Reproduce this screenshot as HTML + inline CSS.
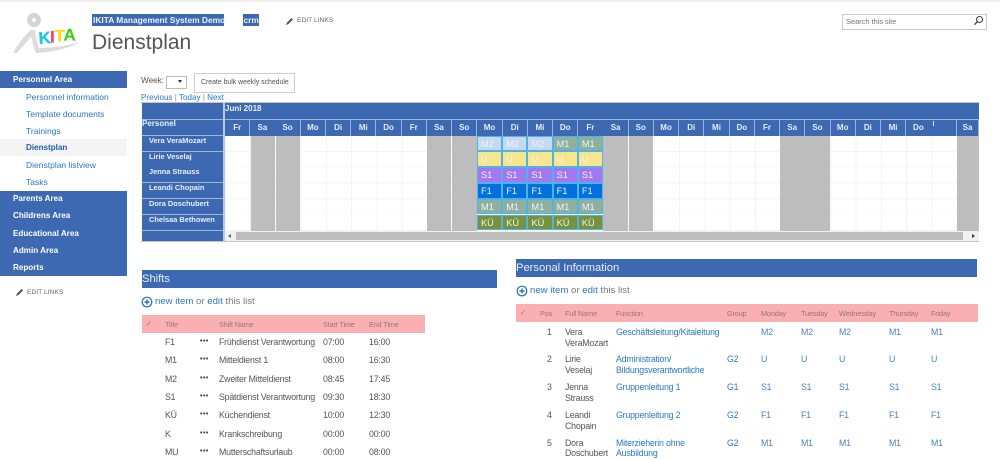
<!DOCTYPE html>
<html><head><meta charset="utf-8"><title>Dienstplan</title>
<style>
html,body{margin:0;padding:0;background:#fff}
body{width:1000px;height:460px;overflow:hidden;position:relative;font-family:"Liberation Sans",sans-serif;font-size:9.5px;color:#555}
.a,.t{position:absolute;white-space:nowrap}
.t{line-height:12px}
.b{color:#2a78c4}
.nav{left:0;width:127px;background:#3d68b2;color:#fff;font-weight:bold;font-size:8.1px}
.nav div{position:absolute;left:13px;line-height:12px;white-space:nowrap}
.sub{left:26px;color:#2a78c4;font-size:8.5px}
.head{background:#3d68b2;color:#e8eef8;font-size:11.2px;line-height:19px}
.pink{background:#fab0b2}
.pink .t{color:#96787a;font-size:7.3px;letter-spacing:-.15px}
.r .t{font-size:8.8px;letter-spacing:-.2px}
.r .t[style*="font-weight:bold"]{font-size:7px;color:#444;letter-spacing:.5px}
.hd{position:absolute;top:120px;width:24.4px;height:15.5px;background:#3d68b2;color:#e6ecf7;font-weight:bold;font-size:8px;line-height:15px;text-align:center}
.nm{position:absolute;left:142px;width:81px;height:15px;background:#3d68b2;color:#e8eef8;font-weight:bold;font-size:7.4px;line-height:10px;text-indent:7px;white-space:nowrap}
.gr{position:absolute;top:135.5px;height:95px;width:24.7px;background:#bdbdbd}
.row{position:absolute;left:477px;height:15.8px;display:flex}
.row div{width:25.23px;height:15.8px;box-sizing:border-box;border:1px solid #4fb3e8;color:#eef3f8;font-size:9.2px;line-height:15px;text-indent:3px}
.m2{background:#c6d9f1}.m1{background:#8fb09f}.u{background:#f8e68f}.s1{background:#a377ef}.f1{background:#0070dc}.ku{background:#76923c}
.v{color:#4a7fc8}
</style></head><body>
<div class="a" style="left:0;top:0;width:1000px;height:2px;background:#efefef"></div>

<svg class="a" style="left:5px;top:8px" width="80" height="50" viewBox="0 0 80 50">
<circle cx="29" cy="12" r="4.5" fill="none" stroke="#d4d4d4" stroke-width="5"/>
<path d="M8 45C13 36 20 27 27 21L29 25C24 32 17 39 12 45Z" fill="#dcdcdc"/>
<path d="M25 24L30 22C31 30 32 35 34 40C46 40 62 38 75 34C66 40 48 44 31 45C28 38 27 31 25 24Z" fill="#dcdcdc"/>
<text x="34" y="36" font-family="Liberation Sans" font-weight="bold" font-size="17" fill="#18c8e8" stroke="#18c8e8" stroke-width=".3" transform="rotate(-4 34 36)">K</text>
<text x="45" y="34.500" font-family="Liberation Sans" font-weight="bold" font-size="17" fill="#f0407a" stroke="#f0407a" stroke-width=".3">I</text>
<text x="49.500" y="33.500" font-family="Liberation Sans" font-weight="bold" font-size="17" fill="#f6dc1c" stroke="#f6dc1c" stroke-width=".3">T</text>
<text x="58.500" y="32.500" font-family="Liberation Sans" font-weight="bold" font-size="17" fill="#3ed21e" stroke="#3ed21e" stroke-width=".3">A</text>
</svg>

<div class="a" style="left:92px;top:14px;width:132px;height:12px;background:#3d68b2"></div>
<div class="t" style="left:93px;top:14px;color:#eef;font-weight:bold;font-size:8.4px">IKITA Management System Demo</div>
<div class="a" style="left:243px;top:14px;width:16px;height:12px;background:#3d68b2"></div>
<div class="t" style="left:243.5px;top:14px;color:#eef;font-weight:bold;font-size:8.4px">crm</div>
<svg class="a" style="left:285px;top:17px" width="9" height="9" viewBox="0 0 9 9"><path d="M1 8L2 5.500L6.500 1L8 2.500L3.500 7Z" fill="#555"/></svg>
<div class="t" style="left:297px;top:15px;font-size:6.7px;color:#666">EDIT LINKS</div>
<div class="t" style="left:92px;top:29px;font-size:21px;line-height:28px;color:#555">Dienstplan</div>

<div class="a" style="left:842px;top:13.5px;width:143px;height:14px;border:1px solid #c8c8c8;background:#fff"></div>
<div class="t" style="left:846px;top:15.5px;font-size:7.6px;letter-spacing:-.1px;color:#777">Search this site</div>
<svg class="a" style="left:973px;top:15px" width="11" height="11" viewBox="0 0 11 11"><circle cx="6.500" cy="4.500" r="3" fill="none" stroke="#444" stroke-width="1.100"/><path d="M4.300 6.700L1.500 9.700" stroke="#444" stroke-width="1.400"/></svg>

<!-- sidebar -->
<div class="a nav" style="top:71px;height:17px"><div style="top:3px">Personnel Area</div></div>
<div class="t sub" style="top:91px">Personnel information</div>
<div class="t sub" style="top:108px">Template documents</div>
<div class="t sub" style="top:125px">Trainings</div>
<div class="a" style="left:0;top:139px;width:127px;height:17px;background:#f4f4f4"></div>
<div class="t sub" style="top:142px;font-weight:bold;color:#1f5fa8;font-size:8.1px">Dienstplan</div>
<div class="t sub" style="top:159px">Dienstplan listview</div>
<div class="t sub" style="top:176px">Tasks</div>
<div class="a nav" style="top:190.5px;height:85px">
<div style="top:2.5px">Parents Area</div><div style="top:19.5px">Childrens Area</div><div style="top:37px">Educational Area</div><div style="top:54px">Admin Area</div><div style="top:71px">Reports</div>
</div>
<svg class="a" style="left:15px;top:288px" width="9" height="9" viewBox="0 0 9 9"><path d="M1 8L2 5.500L6.500 1L8 2.500L3.500 7Z" fill="#555"/></svg>
<div class="t" style="left:27px;top:286.5px;font-size:6.7px;color:#666">EDIT LINKS</div>

<!-- toolbar -->
<div class="t" style="left:141px;top:75px;font-size:8.2px">Week:</div>
<div class="a" style="left:166px;top:76px;width:19px;height:11px;border:1px solid #bbb;background:#fff"></div>
<div class="a" style="left:178px;top:80px;width:0;height:0;border:2.5px solid transparent;border-top:3px solid #333"></div>
<div class="a" style="left:194px;top:73px;width:99px;height:18px;border:1px solid #ccc;background:#fdfdfd"></div>
<div class="t" style="left:201px;top:77px;font-size:6.9px;color:#555">Create bulk weekly schedule</div>
<div class="t b" style="left:141px;top:92px;font-size:8.1px">Previous <span style="color:#888">|</span> Today <span style="color:#888">|</span> Next</div>

<!-- calendar -->
<div class="a" style="left:141px;top:102px;width:838px;height:139.5px;border:1px solid #c4c4c4;box-sizing:border-box;border-left:0;background:#fff"></div>
<div class="a" style="left:142px;top:103px;width:836.5px;height:16px;background:#3d68b2"></div>
<div class="a" style="left:142px;top:119px;width:836.5px;height:16.5px;background:#9fb3d6"></div>
<div class="a" style="left:142px;top:119px;width:81px;height:122px;background:#9fb3d6"></div>
<div class="a" style="left:223px;top:103px;width:1.5px;height:138px;background:#b9c8e2"></div>
<div class="t" style="left:225px;top:102.5px;color:#e8eef8;font-weight:bold;font-size:8px">Juni 2018</div>
<div class="a" style="left:142px;top:120px;width:81px;height:15px;background:#3d68b2"></div>
<div class="t" style="left:142px;top:118px;color:#e8eef8;font-weight:bold;font-size:8px">Personel</div>

<div class="a" style="left:224.7px;top:135.5px;width:753.8px;height:95px;background-image:repeating-linear-gradient(90deg,#f3f3f3 0,#f3f3f3 1px,transparent 1px,transparent 25.23px),repeating-linear-gradient(180deg,transparent 0,transparent 15px,#f4f4f4 15px,#f4f4f4 15.83px)"></div>

<div class="hd" style="left:225px">Fr</div><div class="hd" style="left:250.2px">Sa</div><div class="hd" style="left:275.4px">So</div><div class="hd" style="left:300.7px">Mo</div><div class="hd" style="left:325.9px">Di</div><div class="hd" style="left:351.1px">Mi</div><div class="hd" style="left:376.4px">Do</div><div class="hd" style="left:401.6px">Fr</div><div class="hd" style="left:426.8px">Sa</div><div class="hd" style="left:452px">So</div><div class="hd" style="left:477.3px">Mo</div><div class="hd" style="left:502.5px">Di</div><div class="hd" style="left:527.7px">Mi</div><div class="hd" style="left:553px">Do</div><div class="hd" style="left:578.2px">Fr</div><div class="hd" style="left:603.4px">Sa</div><div class="hd" style="left:628.6px">So</div><div class="hd" style="left:653.9px">Mo</div><div class="hd" style="left:679.1px">Di</div><div class="hd" style="left:704.3px">Mi</div><div class="hd" style="left:729.6px">Do</div><div class="hd" style="left:754.8px">Fr</div><div class="hd" style="left:780px">Sa</div><div class="hd" style="left:805.2px">So</div><div class="hd" style="left:830.5px">Mo</div><div class="hd" style="left:855.7px">Di</div><div class="hd" style="left:880.9px">Mi</div><div class="hd" style="left:906.2px">Do</div><div class="hd" style="left:931.4px"></div><div class="hd" style="left:956.6px;width:21.9px">Sa</div>
<div class="a" style="left:932.5px;top:121px;width:1px;height:5px;background:#dfe6f3"></div>

<div class="nm" style="top:135.7px">Vera VeraMozart</div><div class="nm" style="top:151.6px">Lirie Veselaj</div><div class="nm" style="top:167.4px">Jenna Strauss</div><div class="nm" style="top:183.3px">Leandi Chopain</div><div class="nm" style="top:198.8px">Dora Doschubert</div><div class="nm" style="top:214.5px;height:15.5px">Chelsaa Bethowen</div>
<div class="a" style="left:142px;top:231px;width:81px;height:10px;background:#3d68b2"></div>

<div class="gr" style="left:250.5px"></div><div class="gr" style="left:275.7px"></div><div class="gr" style="left:426.8px"></div><div class="gr" style="left:452px"></div><div class="gr" style="left:603.4px"></div><div class="gr" style="left:628.6px"></div><div class="gr" style="left:780px"></div><div class="gr" style="left:805.3px"></div><div class="gr" style="left:956.8px;width:21.7px"></div>

<div class="row" style="top:135.5px"><div class="m2">M2</div><div class="m2">M2</div><div class="m2">M2</div><div class="m1">M1</div><div class="m1">M1</div></div>
<div class="row" style="top:151.3px"><div class="u">U</div><div class="u">U</div><div class="u">U</div><div class="u">U</div><div class="u">U</div></div>
<div class="row" style="top:167.1px"><div class="s1">S1</div><div class="s1">S1</div><div class="s1">S1</div><div class="s1">S1</div><div class="s1">S1</div></div>
<div class="row" style="top:182.9px"><div class="f1">F1</div><div class="f1">F1</div><div class="f1">F1</div><div class="f1">F1</div><div class="f1">F1</div></div>
<div class="row" style="top:198.7px"><div class="m1">M1</div><div class="m1">M1</div><div class="m1">M1</div><div class="m1">M1</div><div class="m1">M1</div></div>
<div class="row" style="top:214.5px"><div class="ku">KÜ</div><div class="ku">KÜ</div><div class="ku">KÜ</div><div class="ku">KÜ</div><div class="ku">KÜ</div></div>

<div class="a" style="left:224.5px;top:231px;width:754px;height:10px;background:#f1f1f1"></div>
<div class="a" style="left:236px;top:232px;width:727px;height:8px;background:#bdbdbd"></div>
<div class="a" style="left:228px;top:233.5px;width:0;height:0;border:2.5px solid transparent;border-right:3px solid #666;border-left:0"></div>
<div class="a" style="left:972px;top:233.5px;width:0;height:0;border:2.5px solid transparent;border-left:3px solid #333;border-right:0"></div>

<!-- Shifts -->
<div class="a head" style="left:142px;top:270px;width:355px;height:18px">Shifts</div>
<svg class="a" style="left:141px;top:295.5px" width="12" height="12" viewBox="0 0 12 12"><circle cx="6" cy="6" r="4.800" fill="none" stroke="#2a6fb8" stroke-width="1.200"/><path d="M6 3.500V8.500M3.500 6H8.500" stroke="#2a6fb8" stroke-width="1.400"/></svg>
<div class="t" style="left:155px;top:296px;font-size:9.6px;color:#777"><span class="b">new item</span> or <span class="b">edit</span> this list</div>
<div class="a pink" style="left:142px;top:315px;width:283px;height:18px">
<div class="t" style="left:4px;top:3px">✓</div><div class="t" style="left:23px;top:4px">Title</div><div class="t" style="left:77px;top:4px">Shift Name</div><div class="t" style="left:181px;top:4px">Start Time</div><div class="t" style="left:227px;top:4px">End Time</div>
</div>
<div class="r">
<div class="t" style="left:165px;top:336px">F1</div><div class="t" style="left:200px;top:336px;font-weight:bold">•••</div><div class="t" style="left:219px;top:336px">Frühdienst Verantwortung</div><div class="t" style="left:323px;top:336px">07:00</div><div class="t" style="left:369px;top:336px">16:00</div>
<div class="t" style="left:165px;top:354px">M1</div><div class="t" style="left:200px;top:354px;font-weight:bold">•••</div><div class="t" style="left:219px;top:354px">Mitteldienst 1</div><div class="t" style="left:323px;top:354px">08:00</div><div class="t" style="left:369px;top:354px">16:30</div>
<div class="t" style="left:165px;top:372.5px">M2</div><div class="t" style="left:200px;top:372.5px;font-weight:bold">•••</div><div class="t" style="left:219px;top:372.5px">Zweiter Mitteldienst</div><div class="t" style="left:323px;top:372.5px">08:45</div><div class="t" style="left:369px;top:372.5px">17:45</div>
<div class="t" style="left:165px;top:391px">S1</div><div class="t" style="left:200px;top:391px;font-weight:bold">•••</div><div class="t" style="left:219px;top:391px">Spätdienst Verantwortung</div><div class="t" style="left:323px;top:391px">09:30</div><div class="t" style="left:369px;top:391px">18:30</div>
<div class="t" style="left:165px;top:409px">KÜ</div><div class="t" style="left:200px;top:409px;font-weight:bold">•••</div><div class="t" style="left:219px;top:409px">Küchendienst</div><div class="t" style="left:323px;top:409px">10:00</div><div class="t" style="left:369px;top:409px">12:30</div>
<div class="t" style="left:165px;top:427.5px">K</div><div class="t" style="left:200px;top:427.5px;font-weight:bold">•••</div><div class="t" style="left:219px;top:427.5px">Krankschreibung</div><div class="t" style="left:323px;top:427.5px">00:00</div><div class="t" style="left:369px;top:427.5px">00:00</div>
<div class="t" style="left:165px;top:446px">MU</div><div class="t" style="left:200px;top:446px;font-weight:bold">•••</div><div class="t" style="left:219px;top:446px">Mutterschaftsurlaub</div><div class="t" style="left:323px;top:446px">00:00</div><div class="t" style="left:369px;top:446px">08:00</div>
</div>

<!-- Personal -->
<div class="a head" style="left:516px;top:259px;width:461px;height:18px">Personal Information</div>
<svg class="a" style="left:516px;top:285px" width="12" height="12" viewBox="0 0 12 12"><circle cx="6" cy="6" r="4.800" fill="none" stroke="#2a6fb8" stroke-width="1.200"/><path d="M6 3.500V8.500M3.500 6H8.500" stroke="#2a6fb8" stroke-width="1.400"/></svg>
<div class="t" style="left:530px;top:285px;font-size:9.6px;color:#777"><span class="b">new item</span> or <span class="b">edit</span> this list</div>
<div class="a pink" style="left:516px;top:304px;width:462px;height:18px">
<div class="t" style="left:4px;top:3px">✓</div><div class="t" style="left:24px;top:4px">Pos</div><div class="t" style="left:49px;top:4px">Full Name</div><div class="t" style="left:100px;top:4px">Function</div><div class="t" style="left:211px;top:4px">Group</div><div class="t" style="left:245px;top:4px">Monday</div><div class="t" style="left:285px;top:4px">Tuesday</div><div class="t" style="left:323px;top:4px">Wednesday</div><div class="t" style="left:373px;top:4px">Thursday</div><div class="t" style="left:415px;top:4px">Friday</div>
</div>
<div class="r">
<div class="t" style="left:547px;top:326px">1</div><div class="t" style="left:565px;top:326px">Vera</div><div class="t" style="left:565px;top:336.5px">VeraMozart</div><div class="t b" style="left:616px;top:326px">Geschäftsleitung/Kitaleitung</div>
<div class="t v" style="left:761px;top:326px">M2</div><div class="t v" style="left:801px;top:326px">M2</div><div class="t v" style="left:839px;top:326px">M2</div><div class="t v" style="left:889px;top:326px">M1</div><div class="t v" style="left:931px;top:326px">M1</div>
<div class="t" style="left:547px;top:353px">2</div><div class="t" style="left:565px;top:353px">Lirie</div><div class="t" style="left:565px;top:364px">Veselaj</div><div class="t b" style="left:616px;top:353px">Administration/</div><div class="t b" style="left:616px;top:364px">Bildungsverantwortliche</div><div class="t b" style="left:727px;top:353px">G2</div>
<div class="t v" style="left:761px;top:353px">U</div><div class="t v" style="left:801px;top:353px">U</div><div class="t v" style="left:839px;top:353px">U</div><div class="t v" style="left:889px;top:353px">U</div><div class="t v" style="left:931px;top:353px">U</div>
<div class="t" style="left:547px;top:381px">3</div><div class="t" style="left:565px;top:381px">Jenna</div><div class="t" style="left:565px;top:392px">Strauss</div><div class="t b" style="left:616px;top:381px">Gruppenleitung 1</div><div class="t b" style="left:727px;top:381px">G1</div>
<div class="t v" style="left:761px;top:381px">S1</div><div class="t v" style="left:801px;top:381px">S1</div><div class="t v" style="left:839px;top:381px">S1</div><div class="t v" style="left:889px;top:381px">S1</div><div class="t v" style="left:931px;top:381px">S1</div>
<div class="t" style="left:547px;top:409px">4</div><div class="t" style="left:565px;top:409px">Leandi</div><div class="t" style="left:565px;top:419.5px">Chopain</div><div class="t b" style="left:616px;top:409px">Gruppenleitung 2</div><div class="t b" style="left:727px;top:409px">G2</div>
<div class="t v" style="left:761px;top:409px">F1</div><div class="t v" style="left:801px;top:409px">F1</div><div class="t v" style="left:839px;top:409px">F1</div><div class="t v" style="left:889px;top:409px">F1</div><div class="t v" style="left:931px;top:409px">F1</div>
<div class="t" style="left:547px;top:436.5px">5</div><div class="t" style="left:565px;top:436.5px">Dora</div><div class="t" style="left:565px;top:447px">Doschubert</div><div class="t b" style="left:616px;top:436.5px">Miterzieherin ohne</div><div class="t b" style="left:616px;top:447px">Ausbildung</div><div class="t b" style="left:727px;top:436.5px">G2</div>
<div class="t v" style="left:761px;top:436.5px">M1</div><div class="t v" style="left:801px;top:436.5px">M1</div><div class="t v" style="left:839px;top:436.5px">M1</div><div class="t v" style="left:889px;top:436.5px">M1</div><div class="t v" style="left:931px;top:436.5px">M1</div>
</div>
</body></html>
